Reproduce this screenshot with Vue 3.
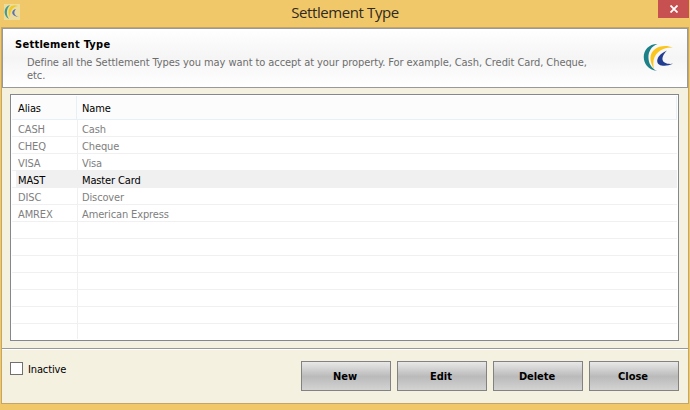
<script setup>
const rows = [
  { alias: 'CASH', name: 'Cash' },
  { alias: 'CHEQ', name: 'Cheque' },
  { alias: 'VISA', name: 'Visa' },
  { alias: 'MAST', name: 'Master Card', selected: true },
  { alias: 'DISC', name: 'Discover' },
  { alias: 'AMREX', name: 'American Express' },
  ...Array.from({ length: 7 }, () => ({ alias: '', name: '' })),
]
const actions = ['New', 'Edit', 'Delete', 'Close']
</script>

<template>
  <div class="window">
    <header class="titlebar">
      <svg class="app-icon" width="16" height="16" viewBox="0 0 16 16">
        <rect width="16" height="16" fill="#eddd9c" />
        <path d="M6 1C-1 3-1 12 5 15C2 11 2 5 6 1Z" fill="#3f9a94" />
        <path d="M14 2C7-1 2 6 6 13C6 7 8 3 14 2Z" fill="#efc928" />
        <path d="M12 5C7 6 6 12 15 13C10 12 9 8 12 5Z" fill="#5b70b2" />
      </svg>
      <h1>Settlement Type</h1>
      <button class="close" aria-label="Close">
        <svg width="8" height="8" viewBox="0 0 8 8">
          <path d="M.5 .5L7.5 7.5M7.5 .5L.5 7.5" stroke="#fff" stroke-width="1.8" />
        </svg>
      </button>
    </header>
    <main class="client">
      <section class="banner">
        <div class="banner-text">
          <h2>Settlement Type</h2>
          <p>Define all the Settlement Types you may want to accept at your property. For example, Cash, Credit Card, Cheque,<br />etc.</p>
        </div>
        <svg class="logo" width="32" height="30" viewBox="0 0 32 30">
          <path d="M14.500 1C-3.500 1-4 26 14 28C2.500 23 2.500 5 14.500 1Z" fill="#1c8088" />
          <path d="M30 4.500C17-1 0 8 11 26C8 14 15 4 30 4.500Z" fill="#fac51d" />
          <path d="M24 7.500C13 12 11.500 21 18.500 22.500C22 23.200 26 22.600 30 20.800C19 22 16 15.500 24 7.500Z" fill="#213d91" />
        </svg>
      </section>
      <section class="list">
        <div class="head">
          <span class="alias">Alias</span><span class="name">Name</span>
        </div>
        <div class="body">
          <div v-for="(row, i) in rows" :key="i" class="row" :class="{ selected: row.selected }">
            <span class="alias">{{ row.alias }}</span><span class="name">{{ row.name }}</span>
          </div>
        </div>
      </section>
      <footer class="footer">
        <label class="check"><span class="box"></span><span class="check-label">Inactive</span></label>
        <div class="actions">
          <button v-for="a in actions" :key="a" class="action">{{ a }}</button>
        </div>
      </footer>
    </main>
  </div>
</template>

<style>
body {
  margin: 0;
  overflow: hidden;
}
</style>

<style scoped>
* {
  box-sizing: border-box;
}
.window {
  width: 690px;
  height: 410px;
  padding: 0 1px 6px;
  background: #f0c869;
  font: 11px/13px "DejaVu Sans Condensed", "DejaVu Sans", sans-serif;
  font-stretch: condensed;
  letter-spacing: -0.13px;
  color: #000;
}
.titlebar {
  height: 27px;
  display: grid;
  grid-template-columns: 31px 1fr 31px;
  align-items: start;
}
.app-icon {
  margin: 4px 0 0 3px;
}
h1 {
  margin: 2px 0 0;
  text-align: center;
  font: 15px/20px "Open Sans", sans-serif;
  letter-spacing: -0.4px;
  color: #302a20;
}
.close {
  width: 31px;
  height: 18px;
  padding: 0;
  border: 0;
  background: #c75050;
  display: flex;
  align-items: center;
  justify-content: center;
}
.client {
  height: 377px;
  border: 1px solid #c6a667;
  background: #f5f1e0;
  display: flex;
  flex-direction: column;
}
.banner {
  height: 60px;
  flex: none;
  border: 1px solid #999;
  background: linear-gradient(#fff, #f5f5f5 50%, #fff);
  display: flex;
  justify-content: space-between;
}
.banner-text {
  padding: 9px 0 0 12px;
}
h2 {
  margin: 0;
  font-size: 11px;
  line-height: 13px;
  letter-spacing: 0.27px;
}
p {
  margin: 5px 0 0 12px;
  color: #6d6d6d;
  letter-spacing: -0.075px;
  white-space: nowrap;
}
.logo {
  margin: 14px 12px 0 0;
}
.list {
  width: 669px;
  height: 247px;
  flex: none;
  margin: 6px 0 0 8px;
  padding: 1px;
  border: 1px solid #828790;
  background: #fff;
}
.head {
  width: 665px;
  height: 24px;
  display: flex;
  line-height: 25px;
  background: #fcfcfc;
  border: solid #e5f0fb;
  border-width: 0 1px 1px 0;
}
.head .alias {
  width: 65px;
  padding-left: 6px;
  border-right: 1px solid #e5f0fb;
}
.head .name {
  padding-left: 5px;
}
.body {
  height: 219px;
  overflow: hidden;
}
.row {
  width: 665px;
  height: 17px;
  display: flex;
  line-height: 20px;
  color: #808080;
  border-bottom: 1px solid #f0f0f0;
}
.row .alias {
  width: 66px;
  height: 17px;
  padding-left: 6px;
  border-right: 1px solid #f0f0f0;
}
.row .name {
  padding-left: 4px;
}
.row.selected {
  color: #000;
  background: linear-gradient(90deg, #fff 4px, #f0f0f0 4px);
}
.footer {
  margin-top: 7px;
  flex: 1;
  border-top: 1px solid #999;
  box-shadow: inset 0 1px #fff;
  padding: 12px 9px 0 8px;
  display: flex;
  justify-content: space-between;
}
.check {
  height: 15px;
  display: flex;
  align-items: center;
  gap: 5px;
}
.check-label {
  padding-top: 2px;
}
.box {
  width: 13px;
  height: 13px;
  border: 1px solid #707070;
  background: #fff;
}
.actions {
  display: flex;
  gap: 6px;
}
.action {
  width: 90px;
  height: 30px;
  padding: 0 2px 0 0;
  border: 1px solid #828282;
  background: linear-gradient(#e8e8e8, #bababa 52%, #d3d3d3);
  font: inherit;
  font-weight: bold;
  letter-spacing: -0.05px;
}
</style>
